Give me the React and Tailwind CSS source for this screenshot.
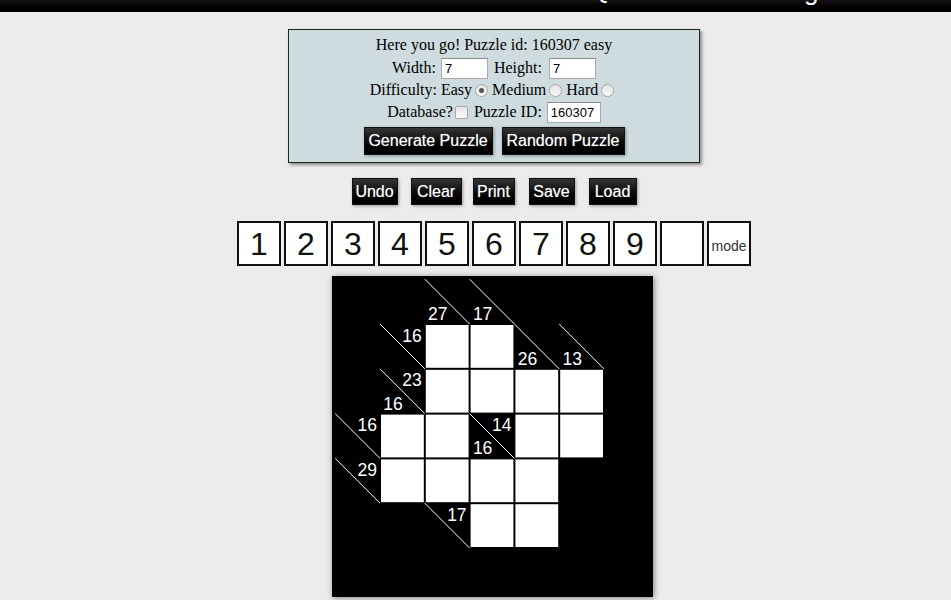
import React from "react";

const S = 44.8;
const O = 3.2;
const whites = [
  [1, 2], [1, 3],
  [2, 2], [2, 3], [2, 4], [2, 5],
  [3, 1], [3, 2], [3, 4], [3, 5],
  [4, 1], [4, 2], [4, 3], [4, 4],
  [5, 3], [5, 4],
];
const clues = [
  { r: 0, c: 2, d: 27 },
  { r: 0, c: 3, d: 17 },
  { r: 1, c: 1, a: 16 },
  { r: 1, c: 4, d: 26 },
  { r: 1, c: 5, d: 13 },
  { r: 2, c: 1, a: 23, d: 16 },
  { r: 3, c: 0, a: 16 },
  { r: 3, c: 3, a: 14, d: 16 },
  { r: 4, c: 0, a: 29 },
  { r: 5, c: 2, a: 17 },
];

function Radio({ checked }) {
  return (
    <span className="relative inline-block w-[13px] h-[13px] rounded-full border border-[#a8a8a8] bg-linear-to-b from-[#e4e4e4] to-[#f8f8f8] ml-[3px] mr-[4px] shrink-0">
      {checked && (
        <span className="absolute left-[3px] top-[3px] w-[5px] h-[5px] rounded-full bg-[#555]" />
      )}
    </span>
  );
}

function Btn({ children, w, h }) {
  return (
    <div
      className={`${w} ${h} flex items-center justify-center bg-linear-to-b from-[#363636] to-[#000] border border-[#111] text-white text-[16px] font-['Liberation_Sans',Arial,sans-serif] shadow-[1px_1px_3px_rgba(0,0,0,0.35)] [text-shadow:0_0_1px_rgba(255,255,255,0.5)]`}
    >
      {children}
    </div>
  );
}

function Field({ value, w }) {
  return (
    <input
      readOnly
      value={value}
      className={`${w} h-[21px] bg-white border border-[#a9a9a9] border-t-[#8a8a8a] px-[3px] text-[13px] text-black font-['Liberation_Sans',Arial,sans-serif] outline-none`}
    />
  );
}

function Puzzle() {
  return (
    <svg width="321" height="321" viewBox="0 0 321 321" className="block">
      <rect x="0" y="0" width="321" height="321" fill="#000" />
      {whites.map(([r, c]) => (
        <rect
          key={`w${r}-${c}`}
          x={O + c * S + 1}
          y={O + r * S + 1}
          width={S - 2}
          height={S - 2}
          fill="#fff"
        />
      ))}
      {clues.map(({ r, c, a, d }) => {
        const x = O + c * S;
        const y = O + r * S;
        return (
          <g key={`c${r}-${c}`}>
            <line x1={x} y1={y} x2={x + S} y2={y + S} stroke="#fff" strokeWidth="1" />
            {a !== undefined && (
              <text
                x={x + S - 3}
                y={y + 17.5}
                textAnchor="end"
                fill="#fff"
                fontSize="17.5"
                fontFamily="'Liberation Sans', Arial, sans-serif"
              >
                {a}
              </text>
            )}
            {d !== undefined && (
              <text
                x={x + 3.3}
                y={y + S - 4}
                fill="#fff"
                fontSize="17.5"
                fontFamily="'Liberation Sans', Arial, sans-serif"
              >
                {d}
              </text>
            )}
          </g>
        );
      })}
    </svg>
  );
}

export default function App() {
  const nums = ["1", "2", "3", "4", "5", "6", "7", "8", "9", ""];
  return (
    <div className="min-h-[600px] bg-[#ececec] overflow-hidden">
      <div className="relative h-[12px] overflow-hidden bg-linear-to-b from-[#161616] to-[#000]">
        <span className="absolute left-[590px] top-[-24px] text-[26px] leading-[26px] text-white font-['Liberation_Sans',Arial,sans-serif]">
          Q
        </span>
        <span className="absolute left-[804px] top-[-22px] text-[26px] leading-[26px] text-white font-['Liberation_Sans',Arial,sans-serif]">
          g
        </span>
      </div>

      <div className="pl-[37px] flex flex-col items-center">
        <div className="mt-[17px] w-[412px] h-[134px] border border-[#222] bg-[#cedbdf] shadow-[2px_2px_3px_#8a8a8a] flex flex-col items-center pt-[6px] font-['Liberation_Serif','Times_New_Roman',serif] text-[16px] text-black leading-none">
          <div className="h-[18px] flex items-center">Here you go! Puzzle id: 160307 easy</div>
          <div className="mt-[3px] h-[22px] flex items-center">
            <span>Width:</span>
            <span className="ml-[5px]"><Field value="7" w="w-[47px]" /></span>
            <span className="ml-[6px]">Height:</span>
            <span className="ml-[7px]"><Field value="7" w="w-[47px]" /></span>
          </div>
          <div className="mt-[2px] h-[18px] flex items-center">
            <span>Difficulty: Easy</span>
            <Radio checked />
            <span>Medium</span>
            <Radio />
            <span>Hard</span>
            <Radio />
          </div>
          <div className="mt-[2px] h-[22px] flex items-center">
            <span>Database?</span>
            <span className="ml-[2px] mr-[6px] inline-block w-[13px] h-[13px] rounded-[2px] border border-[#a8a8a8] bg-linear-to-b from-[#e6e6e6] to-[#fafafa]" />
            <span>Puzzle ID:</span>
            <span className="ml-[5px]"><Field value="160307" w="w-[54px]" /></span>
          </div>
          <div className="mt-[4px] flex gap-[9px]">
            <Btn w="w-[129px]" h="h-[28px]">Generate Puzzle</Btn>
            <Btn w="w-[123px]" h="h-[28px]">Random Puzzle</Btn>
          </div>
        </div>

        <div className="mt-[15px] flex">
          <Btn w="w-[46px]" h="h-[27px]">Undo</Btn>
          <span className="ml-[13px]"><Btn w="w-[51px]" h="h-[27px]">Clear</Btn></span>
          <span className="ml-[11px]"><Btn w="w-[42px]" h="h-[27px]">Print</Btn></span>
          <span className="ml-[14px]"><Btn w="w-[46px]" h="h-[27px]">Save</Btn></span>
          <span className="ml-[14px]"><Btn w="w-[48px]" h="h-[27px]">Load</Btn></span>
        </div>

        <div className="mt-[16px] flex gap-[3px] font-['Liberation_Sans',Arial,sans-serif]">
          {nums.map((n, i) => (
            <div
              key={i}
              className="w-[44px] h-[45px] border-2 border-[#111] bg-white flex items-center justify-center text-[32px] text-[#111] leading-none"
            >
              {n}
            </div>
          ))}
          <div className="w-[44px] h-[45px] border-2 border-[#111] bg-white flex items-center justify-center text-[14px] text-[#333] leading-none pt-[4px]">
            mode
          </div>
        </div>

        <div className="mt-[10px] mr-[3px] shadow-[1px_1px_6px_rgba(0,0,0,0.45)]">
          <Puzzle />
        </div>
      </div>
    </div>
  );
}
